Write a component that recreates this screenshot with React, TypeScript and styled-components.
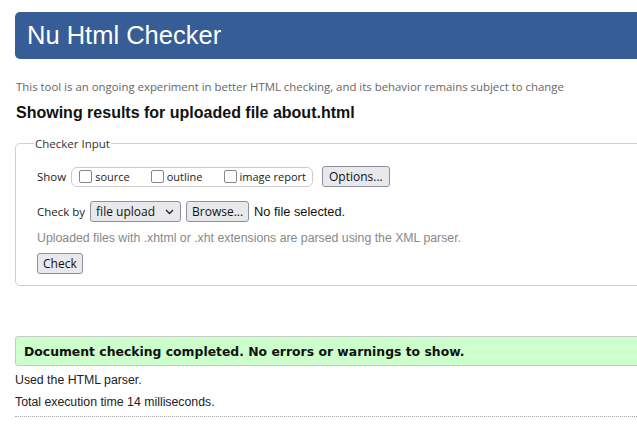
import React from 'react'
import styled, { createGlobalStyle } from 'styled-components'

const GlobalStyle = createGlobalStyle`
  html, body {
    margin: 0;
    padding: 0;
    overflow: hidden;
    background: #fff;
  }
  body {
    font-family: "Liberation Sans", Arial, sans-serif;
    color: #222;
  }
`

const Page = styled.div`
  width: 700px;
  padding: 12px 0 0 15px;
`

const Header = styled.h1`
  margin: 0;
  height: 47px;
  display: flex;
  align-items: center;
  padding-left: 12px;
  background: #365d95;
  color: #fff;
  font-family: "Liberation Sans", Arial, sans-serif;
  font-weight: normal;
  font-size: 25.5px;
  border-radius: 5px 0 0 5px;
`

const Intro = styled.p`
  margin: 20px 0 0 1px;
  font-family: "Open Sans", "Noto Sans", sans-serif;
  font-size: 11.4px;
  color: #666;
`

const ResultsTitle = styled.h2`
  margin: 10px 0 0 1px;
  font-family: "Liberation Sans", Arial, sans-serif;
  font-size: 16px;
  font-weight: bold;
  color: #111;
`

const Fieldset = styled.fieldset`
  margin: 14px 0 0 0;
  padding: 6px 20px 11px 21px;
  border: 1px solid #d0d0d0;
  border-radius: 5px 0 0 5px;
`

const Legend = styled.legend`
  margin-left: -3px;
  padding: 0 1px;
  font-family: "Open Sans", "Noto Sans", sans-serif;
  font-size: 11.5px;
  color: #333;
`

const Row = styled.div<{ gap: number }>`
  display: flex;
  align-items: center;
  gap: ${({ gap }) => gap}px;
`

const Label = styled.span`
  font-family: "Open Sans", "Noto Sans", sans-serif;
  font-size: 11.5px;
  color: #222;
`

const ChoiceGroup = styled.div`
  display: flex;
  align-items: center;
  height: 18px;
  padding: 0 6px 0 7px;
  border: 1px solid #ccc;
  border-radius: 6px;
  margin-left: 1px;
`

const Choice = styled.label<{ space?: number }>`
  display: flex;
  align-items: center;
  gap: 3px;
  margin-right: ${({ space }) => space ?? 0}px;
  font-family: "Open Sans", "Noto Sans", sans-serif;
  font-size: 11px;
  color: #222;
`

const Box = styled.span`
  width: 11px;
  height: 11px;
  border: 1px solid #8a8690;
  border-radius: 2px;
  background: #fff;
`

const Button = styled.span`
  display: inline-flex;
  align-items: center;
  height: 19px;
  padding: 0 5px;
  border: 1px solid #8f8f9d;
  border-radius: 3px;
  background: #e9e9ed;
  font-family: "Open Sans", "Noto Sans", sans-serif;
  font-size: 12px;
  color: #111;
`

const OptionsButton = styled(Button)`
  margin-left: 5px;
  padding: 0 6px;
`

const Select = styled(Button)`
  gap: 10px;
  padding: 0 6px 0 5px;
`

const Plain = styled.span`
  font-family: "Liberation Sans", Arial, sans-serif;
  font-size: 12.8px;
  color: #111;
`

const Hint = styled.p`
  margin: 0;
  font-family: "Liberation Sans", Arial, sans-serif;
  font-size: 12.3px;
  color: #888;
`

const ShowRow = styled(Row)`
  margin-top: 9px;
`

const CheckRow = styled(Row)`
  margin-top: 14px;
`

const HintRow = styled.div`
  margin-top: 9px;
`

const SubmitRow = styled.div`
  margin-top: 8px;
`

const Success = styled.div`
  margin-top: 50px;
  height: 28px;
  display: flex;
  align-items: center;
  padding-left: 8px;
  background: #ccffcc;
  border: 1px solid #c8c8c8;
  border-radius: 3px 0 0 3px;
  font-family: "DejaVu Sans", Verdana, sans-serif;
  font-weight: bold;
  font-size: 12.4px;
  color: #111;
`

const Detail = styled.p<{ top: number }>`
  margin: ${({ top }) => top}px 0 0 0;
  font-family: "Liberation Sans", Arial, sans-serif;
  font-size: 12.3px;
  color: #222;
`

const Divider = styled.hr`
  margin: 7px 0 0 0;
  border: 0;
  border-top: 1px dotted #aaa;
`

const Chevron = () => (
  <svg width="9" height="6" viewBox="0 0 9 6">
    <path d="M1 1l3.5 3.5L8 1" fill="none" stroke="#222" strokeWidth="1.3" />
  </svg>
)

export default function App() {
  return (
    <>
      <GlobalStyle />
      <Page>
        <Header>Nu Html Checker</Header>
        <Intro>This tool is an ongoing experiment in better HTML checking, and its behavior remains subject to change</Intro>
        <ResultsTitle>Showing results for uploaded file about.html</ResultsTitle>
        <Fieldset>
          <Legend>Checker Input</Legend>
          <ShowRow gap={4}>
            <Label>Show</Label>
            <ChoiceGroup>
              <Choice space={21}><Box />source</Choice>
              <Choice space={21}><Box />outline</Choice>
              <Choice><Box />image report</Choice>
            </ChoiceGroup>
            <OptionsButton>Options...</OptionsButton>
          </ShowRow>
          <CheckRow gap={5}>
            <Label>Check by</Label>
            <Select>file upload <Chevron /></Select>
            <Button>Browse...</Button>
            <Plain>No file selected.</Plain>
          </CheckRow>
          <HintRow>
            <Hint>Uploaded files with .xhtml or .xht extensions are parsed using the XML parser.</Hint>
          </HintRow>
          <SubmitRow>
            <Button>Check</Button>
          </SubmitRow>
        </Fieldset>
        <Success>Document checking completed. No errors or warnings to show.</Success>
        <Detail top={7}>Used the HTML parser.</Detail>
        <Detail top={8}>Total execution time 14 milliseconds.</Detail>
        <Divider />
      </Page>
    </>
  )
}
